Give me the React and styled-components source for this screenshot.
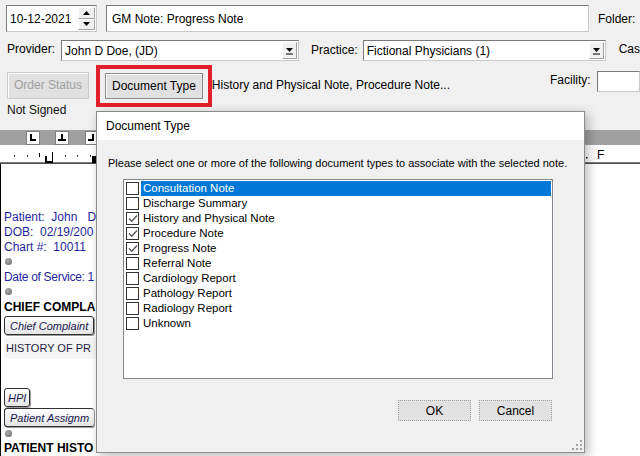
import React from "react";
import styled, { createGlobalStyle } from "styled-components";

const GlobalStyle = createGlobalStyle`
  html, body { margin: 0; padding: 0; background: #fff; }
  body { font-family: "Liberation Sans", Arial, sans-serif; font-size: 12px; color: #000; }
`;

const Screen = styled.div`
  position: relative;
  width: 640px;
  height: 456px;
  overflow: hidden;
  background: #fff;
`;

const TopPanel = styled.div`
  background: #f0f0f0;
  height: 130px;
  display: flex;
  flex-direction: column;
  box-sizing: border-box;
  padding: 5px 0 0 6px;
  white-space: nowrap;
`;

const Row = styled.div`
  display: flex;
  align-items: center;
  height: ${(p) => p.$h}px;
  margin-top: ${(p) => p.$mt || 0}px;
`;

const Field = styled.div`
  box-sizing: border-box;
  width: ${(p) => p.$w}px;
  height: ${(p) => p.$h}px;
  margin-left: ${(p) => p.$ml || 0}px;
  margin-top: ${(p) => p.$mt || 0}px;
  background: #fff;
  border: 1px solid #7a7a7a;
  border-right-color: #c8c8c8;
  border-bottom-color: #c8c8c8;
  display: flex;
  align-items: center;
  padding-left: ${(p) => p.$pl || 3}px;
  font-size: 12px;
  position: relative;
`;

const Spinner = styled.div`
  position: absolute;
  right: 1px;
  top: 1px;
  bottom: 1px;
  width: 17px;
  display: flex;
  flex-direction: column;
`;

const SpinBtn = styled.div`
  flex: 1;
  background: #f0f0f0;
  border: 1px solid #a0a0a0;
  border-top-color: #fff;
  border-left-color: #fff;
  display: flex;
  align-items: center;
  justify-content: center;
`;

const DropBtn = styled.div`
  position: absolute;
  right: 1px;
  top: 1px;
  bottom: 1px;
  width: 15px;
  background: #f0f0f0;
  border: 1px solid #a0a0a0;
  border-top-color: #fff;
  border-left-color: #fff;
  box-sizing: border-box;
  display: flex;
  align-items: center;
  justify-content: center;
`;

const Label = styled.span`
  margin-left: ${(p) => p.$ml || 0}px;
  margin-right: ${(p) => p.$mr || 0}px;
  margin-top: ${(p) => p.$mt || 0}px;
  color: ${(p) => p.$color || "#000"};
  font-size: 12px;
`;

const WinButton = styled.div`
  box-sizing: border-box;
  width: ${(p) => (p.$w ? `${p.$w}px` : "auto")};
  height: ${(p) => p.$h || 26}px;
  margin-left: ${(p) => p.$ml || 0}px;
  padding: 0 6px;
  display: flex;
  align-items: center;
  justify-content: center;
  background: #e1e1e1;
  border: 1px solid ${(p) => (p.$disabled ? "#cacaca" : "#8a8a8a")};
  color: ${(p) => (p.$disabled ? "#a0a0a0" : "#000")};
  box-shadow: inset 1px 1px 0 #fff;
`;

const Highlight = styled.div`
  box-sizing: border-box;
  height: 42px;
  margin: 2px 0 0 7px;
  border: 4px solid #e3202a;
  padding: 0 5px 0 5px;
  display: flex;
  align-items: center;
`;

const Ruler = styled.div`
  height: 34px;
  background: #fff;
`;

const DocArea = styled.div`
  width: 96px;
  overflow: hidden;
  border-left: 1px solid #000;
  height: 292px;
  padding: 46px 0 0 3px;
  box-sizing: border-box;
  display: flex;
  flex-direction: column;
  align-items: flex-start;
  white-space: nowrap;
`;

const DocLine = styled.div`
  color: ${(p) => p.$color || "#1f1fa0"};
  font-weight: ${(p) => (p.$bold ? 700 : 400)};
  font-size: 12px;
  letter-spacing: ${(p) => (p.$tight ? "-0.3px" : "normal")};
  line-height: 15px;
  margin-top: ${(p) => p.$mt || 0}px;
  white-space: pre;
`;

const Dot = styled.div`
  width: 7px;
  height: 7px;
  border-radius: 50%;
  background: radial-gradient(circle at 40% 35%, #b0b0b0, #606060);
  margin: ${(p) => p.$mt || 4}px 0 4px 1px;
`;

const FieldButton = styled.div`
  box-sizing: border-box;
  height: 19px;
  margin-top: ${(p) => p.$mt || 0}px;
  padding: 0 ${(p) => p.$px || 5}px;
  border: 1px solid #303030;
  border-right-width: ${(p) => (p.$open ? 0 : 1)}px;
  border-radius: 3px;
  background: linear-gradient(#ffffff, #e4e4e4);
  box-shadow: 1px 1px 0 #9a9a9a;
  font-style: italic;
  font-size: 11px;
  color: #1a1a50;
  display: flex;
  align-items: center;
`;

const GrayBand = styled.div`
  margin-top: 2px;
  width: 100px;
  height: 22px;
  background: #f5f5f5;
  border-radius: 4px;
  display: flex;
  align-items: center;
  padding-left: 2px;
  color: #1c1c3c;
  font-size: 11px;
`;

const Dialog = styled.div`
  position: absolute;
  left: 96px;
  top: 111px;
  width: 489px;
  height: 342px;
  box-sizing: border-box;
  border: 1px solid #8c8c8c;
  background: #f0f0f0;
  box-shadow: 3px 3px 10px rgba(0, 0, 0, 0.28);
  display: flex;
  flex-direction: column;
  font-size: 11px;
`;

const TitleBar = styled.div`
  height: 28px;
  background: #fff;
  display: flex;
  align-items: center;
  padding-left: 9px;
  font-size: 12px;
`;

const DialogBody = styled.div`
  flex: 1;
  display: flex;
  flex-direction: column;
  padding: 17px 0 0 11px;
  position: relative;
  white-space: nowrap;
`;

const ListBox = styled.div`
  box-sizing: border-box;
  margin: 10px 0 0 15px;
  width: 430px;
  height: 200px;
  background: #fff;
  border: 1px solid #828790;
  padding: 1px 1px 0 2px;
`;

const Item = styled.div`
  display: flex;
  align-items: center;
  height: 15px;
`;

const CheckBox = styled.div`
  box-sizing: border-box;
  width: 13px;
  height: 13px;
  border: 1px solid #333;
  background: #fff;
  margin-right: 2px;
  display: flex;
  align-items: center;
  justify-content: center;
`;

const ItemText = styled.div`
  flex: 1;
  height: 15px;
  line-height: 15px;
  padding-left: 2px;
  font-size: 11.5px;
  background: ${(p) => (p.$selected ? "#0078d7" : "transparent")};
  color: ${(p) => (p.$selected ? "#fff" : "#000")};
`;

const ButtonRow = styled.div`
  display: flex;
  gap: 8px;
  margin: 21px 0 0 290px;
`;

const DlgButton = styled.div`
  box-sizing: border-box;
  width: 73px;
  height: 21px;
  background: #e1e1e1;
  border: 1px dotted #a0a0a0;
  display: flex;
  align-items: center;
  justify-content: center;
  font-size: 12px;
`;

const Grip = styled.svg`
  position: absolute;
  right: 2px;
  bottom: 2px;
`;

const items = [
  ["Consultation Note", false, true],
  ["Discharge Summary", false],
  ["History and Physical Note", true],
  ["Procedure Note", true],
  ["Progress Note", true],
  ["Referral Note", false],
  ["Cardiology Report", false],
  ["Pathology Report", false],
  ["Radiology Report", false],
  ["Unknown", false],
];

const Arrow = ({ up }) => (
  <svg width="7" height="4" viewBox="0 0 7 4">
    <path d={up ? "M3.5 0 L7 4 L0 4 Z" : "M0 0 L7 0 L3.5 4 Z"} fill="#000" />
  </svg>
);

const DropArrow = () => (
  <svg width="9" height="8" viewBox="0 0 9 8">
    <path d="M1 1 H8 L4.5 5 Z" fill="#000" />
    <rect x="1" y="6.5" width="7" height="1" fill="#000" />
  </svg>
);

const Check = () => (
  <svg width="10" height="9" viewBox="0 0 10 9">
    <path d="M1 4.5 L3.8 7.2 L9 1.5" stroke="#555" strokeWidth="1.3" fill="none" />
  </svg>
);

const RulerDrawing = () => {
  const ticks = [14, 27, 65, 77, 90];
  return (
    <svg width="640" height="34" viewBox="0 0 640 34" style={{ display: "block" }}>
      <rect x="0" y="0" width="640" height="15" fill="#a0a0a0" />
      {[26, 55, 85].map((x, i) => (
        <g key={x}>
          <rect x={x + 0.5} y="1.5" width="13" height="13" fill="#fff" stroke="#808080" />
          {i === 0 && <path d={`M${x + 5} 4 V10 H${x + 10}`} stroke="#000" strokeWidth="2" fill="none" />}
          {i === 1 && <path d={`M${x + 7} 4 V10 M${x + 3} 10 H${x + 11}`} stroke="#000" strokeWidth="2" fill="none" />}
          {i === 2 && <path d={`M${x + 8} 4 V10 H${x + 3}`} stroke="#000" strokeWidth="2" fill="none" />}
        </g>
      ))}
      {ticks.map((x) => (
        <rect key={x} x={x} y="25" width="1" height="1.5" fill="#000" />
      ))}
      <rect x="39" y="23" width="1" height="4" fill="#000" />
      <rect x="45" y="26" width="7" height="7" fill="#000" />
      <rect x="47" y="26" width="5" height="5" fill="#fff" />
      <rect x="52" y="22" width="1" height="11" fill="#000" />
      <rect x="92" y="26" width="4" height="7" fill="#000" />
      <rect x="586" y="27" width="1.5" height="1.5" fill="#000" />
      <text x="597" y="29" fontFamily="Liberation Sans, Arial, sans-serif" fontSize="12">F</text>
      <rect x="0" y="32.5" width="640" height="1.2" fill="#000" />
    </svg>
  );
};

export default function App() {
  return (
    <Screen>
      <GlobalStyle />
      <TopPanel>
        <Row $h={27}>
          <Field $w={91} $h={27} $pl={3}>
            10-12-2021
            <Spinner>
              <SpinBtn><Arrow up /></SpinBtn>
              <SpinBtn><Arrow /></SpinBtn>
            </Spinner>
          </Field>
          <Field $w={483} $h={27} $ml={9} $pl={5}>
            GM Note: Progress Note
          </Field>
          <Label $ml={9}>Folder:</Label>
        </Row>
        <Row $h={21} $mt={8}>
          <Label $ml={1} $mr={6} $mt={-4}>Provider:</Label>
          <Field $w={238} $h={21}>
            John D Doe, (JD)
            <DropBtn><DropArrow /></DropBtn>
          </Field>
          <Label $ml={12} $mr={5} $mt={-2}>Practice:</Label>
          <Field $w={243} $h={21}>
            Fictional Physicians (1)
            <DropBtn><DropArrow /></DropBtn>
          </Field>
          <Label $ml={13} $mt={-4}>Cas</Label>
        </Row>
        <Row $h={28} $mt={10}>
          <WinButton $disabled $w={86} $h={27} $ml={1}>
            Order Status
          </WinButton>
          <Highlight>
            <WinButton>Document Type</WinButton>
          </Highlight>
          <Label>History and Physical Note, Procedure Note...</Label>
          <Label $ml={100} $mt={-10}>Facility:</Label>
          <Field $w={50} $h={21} $ml={6} $mt={-8} />
        </Row>
        <Row $h={16} $mt={3}>
          <Label $ml={1} $color="#101010">Not Signed</Label>
        </Row>
      </TopPanel>
      <Ruler>
        <RulerDrawing />
      </Ruler>
      <DocArea>
        <DocLine>{"Patient:  John   D"}</DocLine>
        <DocLine>{"DOB:  02/19/200"}</DocLine>
        <DocLine>{"Chart #:  10011"}</DocLine>
        <Dot $mt={3} />
        <DocLine $mt={1} $tight>{"Date of Service: 1"}</DocLine>
        <Dot $mt={3} />
        <DocLine $bold $color="#000" $mt={1}>CHIEF COMPLA</DocLine>
        <FieldButton $mt={1}>Chief Complaint</FieldButton>
        <GrayBand>HISTORY OF PR</GrayBand>
        <FieldButton $mt={29} $px={3}>HPI</FieldButton>
        <FieldButton $mt={1} $open>Patient Assignm</FieldButton>
        <Dot $mt={3} />
        <DocLine $bold $color="#000">PATIENT HISTO</DocLine>
      </DocArea>

      <Dialog>
        <TitleBar>Document Type</TitleBar>
        <DialogBody>
          <div>Please select one or more of the following document types to associate with the selected note.</div>
          <ListBox>
            {items.map(([name, checked, selected]) => (
              <Item key={name}>
                <CheckBox>{checked && <Check />}</CheckBox>
                <ItemText $selected={selected}>{name}</ItemText>
              </Item>
            ))}
          </ListBox>
          <ButtonRow>
            <DlgButton>OK</DlgButton>
            <DlgButton>Cancel</DlgButton>
          </ButtonRow>
          <Grip width="10" height="10" viewBox="0 0 10 10">
            {[[8, 0], [4, 4], [8, 4], [0, 8], [4, 8], [8, 8]].map(([x, y]) => (
              <rect key={`${x}-${y}`} x={x} y={y} width="2" height="2" fill="#a0a0a0" />
            ))}
          </Grip>
        </DialogBody>
      </Dialog>
    </Screen>
  );
}
